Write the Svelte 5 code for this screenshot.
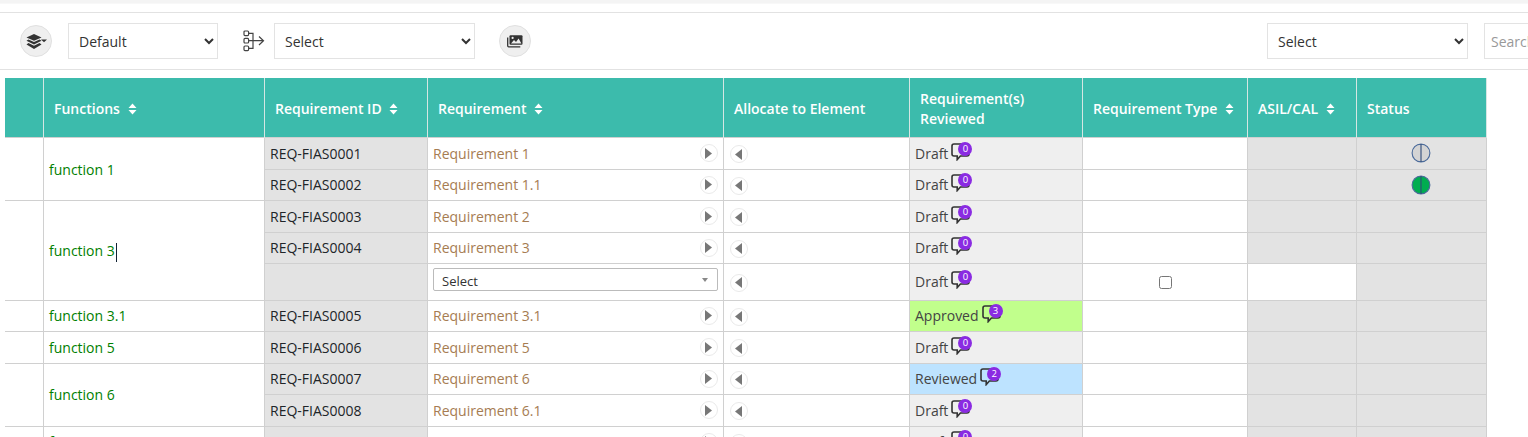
<script>
  const columns = [
    { label: 'Functions', sort: true },
    { label: 'Requirement ID', sort: true },
    { label: 'Requirement', sort: true },
    { label: 'Allocate to Element' },
    { label: 'Requirement(s) Reviewed' },
    { label: 'Requirement Type', sort: true },
    { label: 'ASIL/CAL', sort: true },
    { label: 'Status' }
  ];

  const rows = [
    { fn: 'function 1', span: 2, id: 'REQ-FIAS0001', req: 'Requirement 1', state: 'Draft', count: 0, status: 'grey' },
    { id: 'REQ-FIAS0002', req: 'Requirement 1.1', state: 'Draft', count: 0, status: 'green' },
    { fn: 'function 3', span: 3, caret: true, id: 'REQ-FIAS0003', req: 'Requirement 2', state: 'Draft', count: 0 },
    { id: 'REQ-FIAS0004', req: 'Requirement 3', state: 'Draft', count: 0 },
    { id: '', picker: true, state: 'Draft', count: 0 },
    { fn: 'function 3.1', span: 1, id: 'REQ-FIAS0005', req: 'Requirement 3.1', state: 'Approved', count: 3 },
    { fn: 'function 5', span: 1, id: 'REQ-FIAS0006', req: 'Requirement 5', state: 'Draft', count: 0 },
    { fn: 'function 6', span: 2, id: 'REQ-FIAS0007', req: 'Requirement 6', state: 'Reviewed', count: 2 },
    { id: 'REQ-FIAS0008', req: 'Requirement 6.1', state: 'Draft', count: 0 },
    { fn: 'function 7', span: 1, id: 'REQ-FIAS0009', req: 'Requirement 7', state: 'Draft', count: 0 }
  ];
</script>

<div class="page">
  <div class="topband"></div>

  <div class="toolbar">
    <button class="round" aria-label="Layers">
      <svg width="21" height="15" viewBox="0 0 21 15">
        <path d="M8 0 15.5 3.4 8 6.8 .5 3.4Z" fill="#333" />
        <path d="M2.4 5.4 .5 6.8 8 10.4 15.5 6.8 13.6 5.4 8 8Z" fill="#333" />
        <path d="M2.4 9 .5 10.6 8 15 15.5 10.6 13.6 9 8 11.8Z" fill="#333" />
        <path d="M15 5.5h6l-3 2.8Z" fill="#333" />
      </svg>
    </button>
    <select class="sel first"><option>Default</option></select>
    <svg class="tree" width="22" height="22" viewBox="0 0 22 22" fill="none" stroke="#444" stroke-width="1.2">
      <rect x="1" y="1" width="4.6" height="4.6" rx="1" />
      <rect x="1" y="8.4" width="4.6" height="4.6" rx="1" />
      <rect x="1" y="16" width="4.6" height="4.6" rx="1" />
      <path d="M5.6 3.3H10V18.3H5.6M5.6 10.7H20M16 6.5 20.5 10.7 16 15" />
    </svg>
    <select class="sel second"><option>Select</option></select>
    <button class="round image" aria-label="Images">
      <svg width="16" height="14" viewBox="0 0 16 14">
        <path d="M3.5 1.2h11a1 1 0 0 1 1 1v7.6a1 1 0 0 1-1 1h-11a1 1 0 0 1-1-1V2.2a1 1 0 0 1 1-1Z" fill="#333" />
        <path d="M4 9.4 7 6l2 2 2.6-3.4 2.8 4.8Z" fill="#eee" />
        <circle cx="5.6" cy="3.9" r="1.1" fill="#eee" />
        <path d="M.7 3.6v8.2a1 1 0 0 0 1 1h11.6" fill="none" stroke="#333" stroke-width="1.3" />
      </svg>
    </button>
    <select class="sel third"><option>Select</option></select>
    <input class="search" placeholder="Search" />
  </div>

  <table>
    <colgroup>
      <col style="width:38px" />
      <col style="width:221px" />
      <col style="width:163px" />
      <col style="width:296px" />
      <col style="width:186px" />
      <col style="width:173px" />
      <col style="width:165px" />
      <col style="width:109px" />
      <col style="width:130px" />
    </colgroup>
    <thead>
      <tr>
        <th></th>
        {#each columns as col}
          <th>
            {col.label}
            {#if col.sort}
              <svg class="sort" width="9" height="12" viewBox="0 0 9 12">
                <path d="M4.5 0.5 8.5 5H.5ZM4.5 11.5 .5 7H8.5Z" fill="#fff" />
              </svg>
            {/if}
          </th>
        {/each}
      </tr>
    </thead>
    <tbody>
      {#each rows as row}
        <tr class:tall={row.picker}>
          {#if row.fn}
            <td class="blank" rowspan={row.span}></td>
            <td class="fn" class:nudge={row.caret} rowspan={row.span}>{row.fn}{#if row.caret}<span class="caret"></span>{/if}</td>
          {/if}
          <td class="grey id">{row.id}</td>
          <td class="req">
            {#if row.picker}
              <div class="picker">Select<span class="picker-arrow"></span></div>
            {:else}
              <div class="req-inner">
                <span>{row.req}</span>
                <span class="arrow-btn">
                  <svg width="7" height="11" viewBox="0 0 7 11"><path d="M0 0 7 5.5 0 11Z" fill="#777" /></svg>
                </span>
              </div>
            {/if}
          </td>
          <td class="alloc">
            <span class="arrow-btn">
              <svg width="7" height="11" viewBox="0 0 7 11"><path d="M7 0 0 5.5 7 11Z" fill="#777" /></svg>
            </span>
          </td>
          <td class="state {row.state.toLowerCase()}">
            <div class="state-row">
              <span>{row.state}</span>
              <span class="comment">
                <svg width="19" height="18" viewBox="0 0 19 18" fill="none">
                  <path d="M3 1h13a2 2 0 0 1 2 2v8a2 2 0 0 1-2 2H9.4l-3.2 3.6V13H3a2 2 0 0 1-2-2V3a2 2 0 0 1 2-2Z" stroke="#333" stroke-width="1.6" />
                </svg>
                <span class="badge">{row.count}</span>
              </span>
            </div>
          </td>
          <td class="type">
            {#if row.picker}<input type="checkbox" />{/if}
          </td>
          <td class:grey={!row.picker}></td>
          <td class="grey status">
            {#if row.status}
              <svg width="20" height="20" viewBox="0 0 20 20">
                <circle cx="10" cy="10" r="8.9" fill={row.status === 'green' ? '#00ad50' : '#d4d4d4'} stroke="#4a6a9a" stroke-width="1.1" />
                <path d="M10 1V19" stroke="#2f4a78" stroke-width="1.1" />
              </svg>
            {/if}
          </td>
        </tr>
      {/each}
    </tbody>
  </table>
</div>

<style>
:global(body) { margin: 0; overflow: hidden; background: #fff; }
.page { width: 1528px; height: 437px; overflow: hidden; font-family: "Open Sans", sans-serif; font-size: 14px; color: #212529; }
.topband { height: 3px; margin-bottom: 9px; background: #f4f4f4; border-bottom: 1px solid #f8f8f8; }

.toolbar { display: flex; align-items: center; height: 58px; box-sizing: border-box; border-top: 1px solid #e2e2e2; border-bottom: 1px solid #e2e2e2; padding-left: 20px; margin-top: -1px; }
.round { width: 32px; height: 32px; padding: 0; border-radius: 50%; border: 1px solid #e0e0e0; background: #efefef; display: flex; align-items: center; justify-content: center; flex: none; }
.round svg { display: block; }
.image { margin-left: 24px; }
.sel { height: 36px; box-sizing: border-box; border: 1px solid #e3e3e3; background: #fff; color: #333; font-family: inherit; font-size: 14px; padding: 0 6px; border-radius: 0; flex: none; }
.first { width: 150px; margin-left: 16px; }
.tree { margin-left: 25px; flex: none; }
.second { width: 201px; margin-left: 9px; }
.third { width: 201px; margin-left: 736px; }
.search { width: 80px; height: 36px; box-sizing: border-box; margin-left: 16px; border: 1px solid #e3e3e3; padding: 0 6px; font-family: inherit; font-size: 14px; flex: none; }
.search::placeholder { color: #999; }

table { table-layout: fixed; border-collapse: collapse; width: 1481px; margin: 7.5px 0 0 5px; }
th { height: 60px; box-sizing: border-box; background: #3cbbac; color: #fff; font-weight: 600; text-align: left; padding: 3px 10px 0 10.5px; line-height: 20px; border-left: 1px solid #d6e6e3; border-right: 1px solid #d6e6e3; }
th:first-child { border-left: 0; }
.sort { margin-left: 4px; vertical-align: -1px; }

td { height: 31.5px; box-sizing: border-box; padding: 0 5px 0 5.5px; border: 1px solid #d0d0d0; white-space: nowrap; }
tr.tall td { height: 36.5px; }
td.blank { border-left: 0; }
.grey { background: #e3e3e3; }
.fn { color: #008000; }
.fn.nudge { padding-top: 2px; }
.caret { display: inline-block; height: 19px; margin-left: 1px; vertical-align: middle; border-left: 1px solid #123; }
.req { color: #a67c52; }
.req-inner { display: flex; align-items: center; justify-content: space-between; }
.arrow-btn { display: inline-flex; align-items: center; justify-content: center; width: 18px; height: 18px; border: 1px solid #eaeaea; border-radius: 50%; background: #fff; box-sizing: border-box; vertical-align: middle; }
.picker { height: 23px; box-sizing: border-box; margin-bottom: 4px; border: 1px solid #bbb; border-radius: 2px; padding: 0 8px; line-height: 24px; font-size: 13px; color: #333; position: relative; }
.picker-arrow { position: absolute; right: 9px; top: 9px; border: 3.5px solid transparent; border-top: 4px solid #888; }
.alloc { padding-left: 6px; }
.state { background: #efefef; color: #444; }
.state.approved { background: #c1ff8c; }
.state.reviewed { background: #bde3ff; }
.state-row { display: flex; align-items: center; }
.comment { position: relative; width: 19px; height: 18px; margin: -3px 0 0 3px; }
.comment svg { display: block; }
.badge { position: absolute; top: -1px; right: -2px; width: 14px; height: 14px; line-height: 14px; border-radius: 50%; background: #8a2be2; color: #fff; font-size: 9.5px; text-align: center; }
.type { text-align: center; background: #fff; }
.type input { margin: 5px 0 0 1px; width: 13px; height: 13px; }
.status { text-align: center; }
.status svg { display: block; margin: 0 auto; }
</style>
